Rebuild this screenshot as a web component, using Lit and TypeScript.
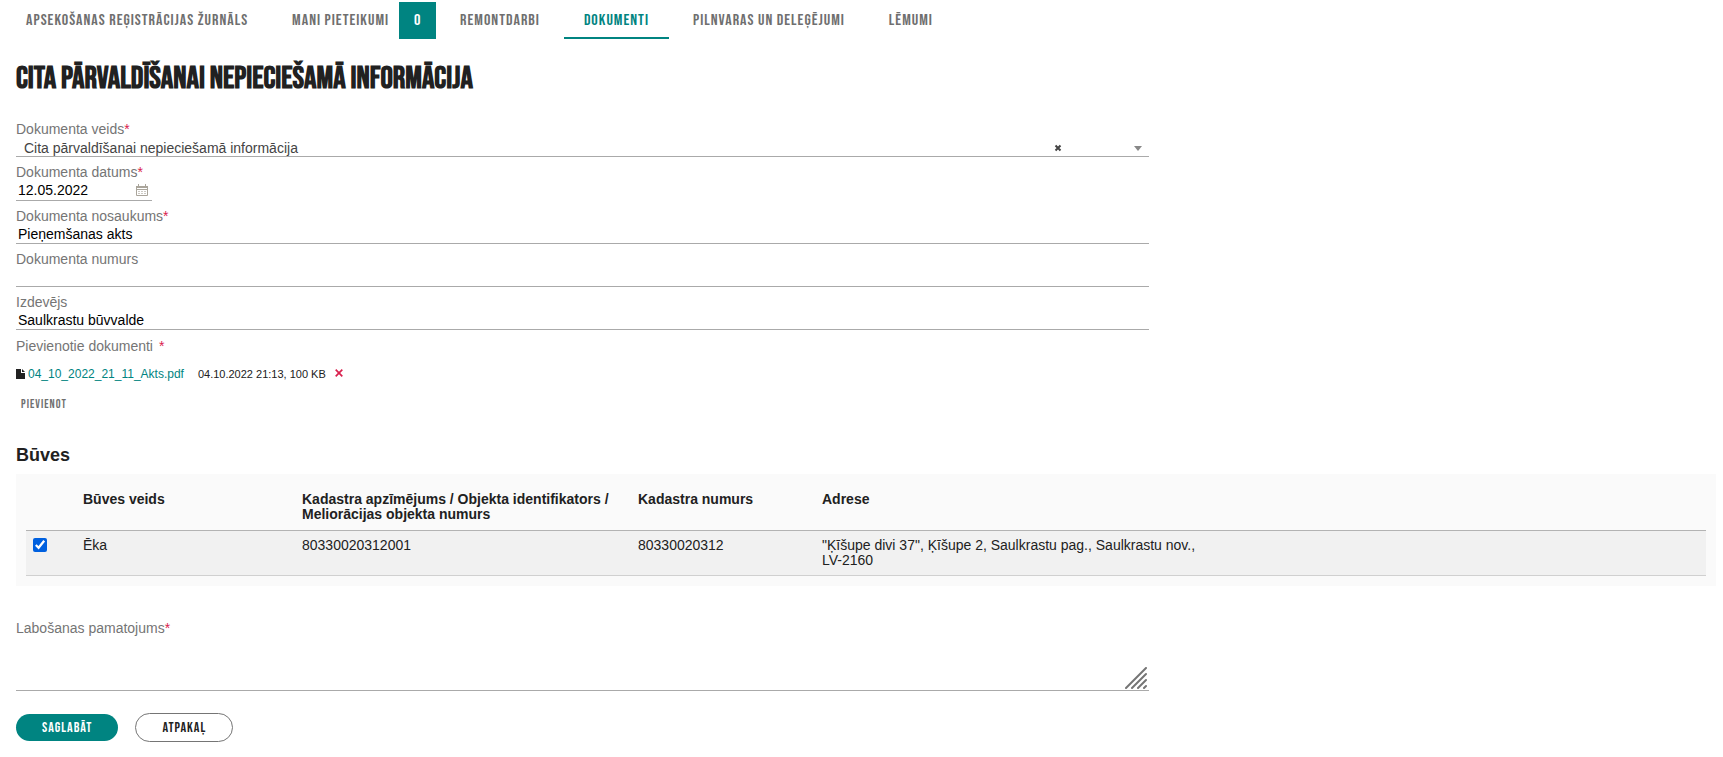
import { LitElement, html, css, nothing } from "lit";
import { customElement, state } from "lit/decorators.js";
import { classMap } from "lit/directives/class-map.js";

interface Tab {
  label: string;
  count?: number;
  active?: boolean;
}

const TABS: Tab[] = [
  { label: "Apsekošanas reģistrācijas žurnāls" },
  { label: "Mani pieteikumi", count: 0 },
  { label: "Remontdarbi" },
  { label: "Dokumenti", active: true },
  { label: "Pilnvaras un deleģējumi" },
  { label: "Lēmumi" },
];

const BUILDINGS = [
  {
    kind: "Ēka",
    cadastre: "80330020312001",
    number: "80330020312",
    address: '"Ķīšupe divi 37", Ķīšupe 2, Saulkrastu pag., Saulkrastu nov., LV-2160',
  },
];

@customElement("app-tabs")
export class AppTabs extends LitElement {
  static styles = css`
    :host {
      display: block;
    }
    .tabs {
      display: flex;
      gap: 4px;
      padding: 2px 0 0 6px;
      font: 16px/32px "Bebas Neue", "Oswald", sans-serif;
      letter-spacing: 1px;
    }
    .tab {
      display: flex;
      padding: 3px 20px 0;
      border-bottom: 2px solid transparent;
      color: #6f6f6f;
      text-decoration: none;
      white-space: nowrap;
    }
    .tab.active {
      color: #008481;
      border-bottom-color: #008481;
    }
    .tab.counted {
      gap: 10px;
      padding-right: 0;
      border-bottom: 0;
    }
    .count {
      width: 37px;
      height: 37px;
      margin-top: -3px;
      background: #008481;
      color: #fff;
      line-height: 37px;
      text-align: center;
    }
  `;

  render() {
    return html`
      <nav class="tabs">
        ${TABS.map(
          (t) => html`<a
            href="#"
            class=${classMap({ tab: true, active: !!t.active, counted: t.count !== undefined })}
            >${t.label}${t.count === undefined ? nothing : html`<span class="count">${t.count}</span>`}</a
          >`
        )}
      </nav>
    `;
  }
}

@customElement("app-root")
export class AppRoot extends LitElement {
  static styles = css`
    :host {
      display: block;
      background: #fff;
      color: #212121;
      font: 14px/18px "Liberation Sans", Arial, sans-serif;
    }
    * {
      box-sizing: border-box;
    }
    .page {
      padding: 0 7px 14px 16px;
    }
    h1 {
      margin: 20px 0 21px;
      font: bold 31px/40px "Bebas Neue", "Oswald", sans-serif;
    }
    .form {
      width: 66.66%;
    }
    .field {
      display: grid;
      margin-bottom: 6px;
    }
    .field label,
    .caption {
      color: #757575;
      line-height: 18px;
    }
    .caption {
      margin-top: 7px;
    }
    .req {
      color: #d9214e;
    }
    .caption .req {
      margin-left: 2px;
    }
    .control {
      width: 100%;
      height: 19px;
      margin: 0;
      padding: 0 2px;
      border: 0;
      border-bottom: 1px solid #aaa;
      border-radius: 0;
      outline: 0;
      background: transparent;
      color: #000;
      font: inherit;
    }
    .date {
      display: grid;
      grid-template-columns: 1fr auto;
      align-items: center;
      width: 136px;
      height: 20px;
      border-bottom: 1px solid #aaa;
    }
    .date .control {
      padding-bottom: 2px;
      border: 0;
    }
    .icon-button {
      display: grid;
      place-items: center;
      padding: 0;
      border: 0;
      background: none;
      color: inherit;
    }
    .date .icon-button {
      padding: 0 4px 2px;
    }
    .picker {
      display: grid;
      grid-template-columns: 1fr 10px 71px 15px;
      align-items: center;
    }
    .picker .control {
      grid-area: 1 / 1 / 2 / 5;
      appearance: none;
      padding: 1px 8px 0;
      color: #444;
    }
    .picker .icon-button {
      grid-area: 1 / 2;
    }
    .arrow {
      grid-area: 1 / 4;
      margin-top: 2px;
      pointer-events: none;
    }
    .field:last-of-type {
      margin-bottom: 0;
    }
    .file {
      display: flex;
      align-items: center;
      margin-top: 10px;
      font-size: 11px;
    }
    .file a {
      margin: 0 14px 0 3px;
      color: #008481;
      font-size: 12px;
      text-decoration: none;
    }
    .file .icon-button {
      margin: 0 0 3px 9px;
      color: #d9214e;
    }
    .attach {
      display: block;
      margin: 13px 0 0;
      padding: 0 5px;
      border: 0;
      background: none;
      color: #6f6f6f;
      font: 12px/18px "Bebas Neue", "Oswald", sans-serif;
      letter-spacing: 1px;
    }
    h2 {
      margin: 29px 0 7px;
      font-size: 18px;
      line-height: 24px;
    }
    .panel {
      padding: 10px;
      background: #fafafa;
    }
    table {
      width: 100%;
      border-collapse: collapse;
      table-layout: fixed;
      line-height: 15px;
    }
    th,
    td {
      padding: 7px 8px;
      text-align: left;
      vertical-align: top;
    }
    th {
      padding: 8px;
    }
    thead tr {
      border-bottom: 1px solid #b3b3b3;
    }
    tbody tr {
      background: #f1f1f1;
      border-bottom: 1px solid #d0d0d0;
    }
    .pick {
      width: 49px;
    }
    .kind {
      width: 219px;
    }
    .cadastre {
      width: 336px;
    }
    .number {
      width: 184px;
    }
    .address {
      width: 394px;
    }
    td:first-child {
      padding-left: 7px;
    }
    .check {
      display: block;
      width: 14px;
      height: 14px;
      margin: 0;
      accent-color: #0060df;
    }
    .reason {
      margin-top: 33px;
    }
    .area {
      display: grid;
    }
    .area .control {
      grid-area: 1 / 1;
      height: 54px;
      resize: none;
    }
    .grip {
      grid-area: 1 / 1;
      place-self: end;
      margin: 0 2px 2px 0;
      pointer-events: none;
    }
    .actions {
      display: flex;
      align-items: center;
      gap: 17px;
      margin-top: 22px;
    }
    .button {
      padding: 0 26px;
      border: 0;
      border-radius: 14px;
      background: #008481;
      color: #fff;
      font: 14px/27px "Bebas Neue", "Oswald", sans-serif;
      letter-spacing: 1px;
    }
    .button.outline {
      border: 1px solid #757575;
      border-radius: 15px;
      background: #fff;
      color: #212121;
    }
  `;

  @state() private buildings = BUILDINGS;

  private req = html`<span class="req">*</span>`;

  private textField(id: string, label: string, value: string, required = false) {
    return html`<section class="field">
      <label for=${id}>${label}${required ? this.req : nothing}</label>
      <input class="control" id=${id} type="text" .value=${value} />
    </section>`;
  }

  render() {
    return html`
      <app-tabs></app-tabs>
      <main class="page">
        <h1>Cita pārvaldīšanai nepieciešamā informācija</h1>
        <div class="form">
          <section class="field">
            <label for="type">Dokumenta veids${this.req}</label>
            <div class="picker">
              <select class="control" id="type">
                <option selected>Cita pārvaldīšanai nepieciešamā informācija</option>
              </select>
              <button class="icon-button" type="button" aria-label="Notīrīt">
                <svg width="8" height="8" viewBox="0 0 8 8" stroke="#444" stroke-width="2">
                  <path d="M1.5 1.5l5 5M6.5 1.5l-5 5" />
                </svg>
              </button>
              <svg class="arrow" width="8" height="5" viewBox="0 0 8 5"><path d="M0 0h8L4 5z" fill="#888" /></svg>
            </div>
          </section>
          <section class="field">
            <label for="date">Dokumenta datums${this.req}</label>
            <div class="date">
              <input class="control" id="date" type="text" value="12.05.2022" />
              <button class="icon-button" type="button" aria-label="Izvēlēties datumu">
                <svg width="12" height="12" viewBox="0 0 12 12" fill="none" stroke="#aaa59b">
                  <path d="M.5 2v9.500h11V2M0 5.500h12" />
                  <path d="M0 3h12" stroke-width="2" />
                  <path d="M2.500 0v2M9.500 0v2" />
                  <path d="M2 7.500h8M2 9.500h8" stroke-dasharray="2 1" opacity=".6" />
                </svg>
              </button>
            </div>
          </section>
          ${this.textField("title", "Dokumenta nosaukums", "Pieņemšanas akts", true)}
          ${this.textField("number", "Dokumenta numurs", "")}
          ${this.textField("issuer", "Izdevējs", "Saulkrastu būvvalde")}
          <div class="caption">Pievienotie dokumenti ${this.req}</div>
          <div class="file">
            <svg width="9" height="10" viewBox="0 0 9 10" fill="#212121">
              <path d="M0 0h5v4h4v6H0z" />
              <path d="M6 0l3 3H6z" />
            </svg>
            <a href="#">04_10_2022_21_11_Akts.pdf</a>
            <span>04.10.2022 21:13, 100 KB</span>
            <button class="icon-button" type="button" aria-label="Dzēst">
              <svg width="8" height="8" viewBox="0 0 8 8" stroke="currentColor" stroke-width="1.700">
                <path d="M.7.7l6.600 6.600M7.300.7L.7 7.300" />
              </svg>
            </button>
          </div>
          <button class="attach" type="button">Pievienot</button>
        </div>

        <h2>Būves</h2>
        <div class="panel">
          <table>
            <thead>
              <tr>
                <th class="pick"></th>
                <th class="kind">Būves veids</th>
                <th class="cadastre">Kadastra apzīmējums / Objekta identifikators / Meliorācijas objekta numurs</th>
                <th class="number">Kadastra numurs</th>
                <th class="address">Adrese</th>
                <th></th>
              </tr>
            </thead>
            <tbody>
              ${this.buildings.map(
                (b) => html`<tr>
                  <td><input class="check" type="checkbox" aria-label=${b.kind} checked /></td>
                  <td>${b.kind}</td>
                  <td>${b.cadastre}</td>
                  <td>${b.number}</td>
                  <td>${b.address}</td>
                  <td></td>
                </tr>`
              )}
            </tbody>
          </table>
        </div>

        <div class="form">
          <section class="field reason">
            <label for="reason">Labošanas pamatojums${this.req}</label>
            <div class="area">
              <textarea class="control" id="reason"></textarea>
              <svg class="grip" width="22" height="22" viewBox="0 0 22 22" stroke="#757575" stroke-width="2" stroke-linecap="round">
                <path d="M1 21L21 1M7 21L21 7M13 21l8-8M19 21l2-2" />
              </svg>
            </div>
          </section>
          <div class="actions">
            <button class="button" type="submit">Saglabāt</button>
            <button class="button outline" type="button">Atpakaļ</button>
          </div>
        </div>
      </main>
    `;
  }
}
